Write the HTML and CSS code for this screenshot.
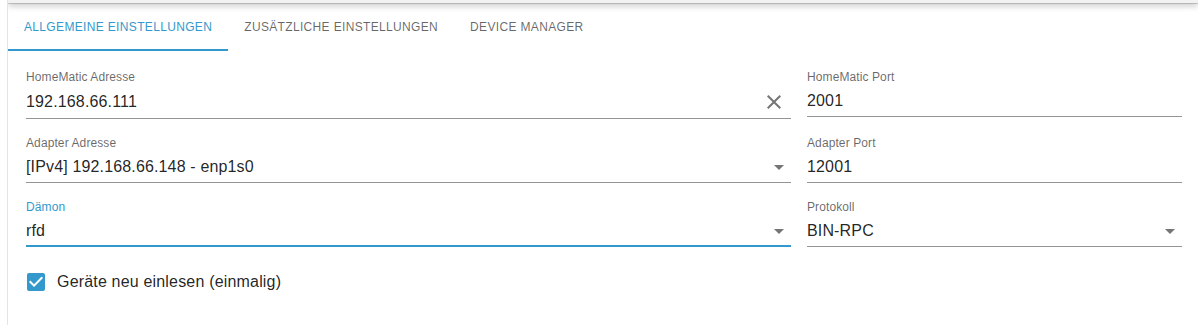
FILE: index.html
```html
<!DOCTYPE html>
<html lang="de">
<head>
<meta charset="utf-8">
<title>Einstellungen</title>
<link rel="stylesheet" href="styles.css">
</head>
<body>
<div class="panel">
  <div class="topbar"></div>
  <nav class="tabs">
    <div class="tab tab--active">Allgemeine Einstellungen</div>
    <div class="tab">Zusätzliche Einstellungen</div>
    <div class="tab">Device Manager</div>
  </nav>
  <div class="content">
    <div class="grid">
      <div class="field">
        <div class="field-label">HomeMatic Adresse</div>
        <div class="field-input field-input--auto">
          <span class="field-value">192.168.66.111</span>
          <svg class="icon icon-clear" viewBox="0 0 24 24"><path d="M19 6.41L17.59 5 12 10.59 6.41 5 5 6.41 10.59 12 5 17.59 6.41 19 12 13.41 17.59 19 19 17.59 13.41 12z"/></svg>
        </div>
      </div>
      <div class="field">
        <div class="field-label">HomeMatic Port</div>
        <div class="field-input">
          <span class="field-value">2001</span>
        </div>
      </div>
      <div class="field">
        <div class="field-label">Adapter Adresse</div>
        <div class="field-input">
          <span class="field-value">[IPv4] 192.168.66.148 - enp1s0</span>
          <svg class="icon" viewBox="0 0 24 24"><path d="M7 10l5 5 5-5z"/></svg>
        </div>
      </div>
      <div class="field">
        <div class="field-label">Adapter Port</div>
        <div class="field-input">
          <span class="field-value">12001</span>
        </div>
      </div>
      <div class="field field--focused">
        <div class="field-label">Dämon</div>
        <div class="field-input">
          <span class="field-value">rfd</span>
          <svg class="icon" viewBox="0 0 24 24"><path d="M7 10l5 5 5-5z"/></svg>
        </div>
      </div>
      <div class="field">
        <div class="field-label">Protokoll</div>
        <div class="field-input">
          <span class="field-value">BIN-RPC</span>
          <svg class="icon" viewBox="0 0 24 24"><path d="M7 10l5 5 5-5z"/></svg>
        </div>
      </div>
    </div>
    <label class="check">
      <span class="check-box">
        <svg viewBox="0 0 24 24"><path d="M19 3H5c-1.11 0-2 .9-2 2v14c0 1.1.89 2 2 2h14c1.11 0 2-.9 2-2V5c0-1.1-.89-2-2-2zm-9 14l-5-5 1.41-1.41L10 14.17l7.59-7.59L19 8l-9 9z"/></svg>
      </span>
      <span class="check-label">Geräte neu einlesen (einmalig)</span>
    </label>
  </div>
</div>
</body>
</html>
```

FILE: styles.css
```css
html, body {
  margin: 0;
  padding: 0;
  background: #ffffff;
}

body {
  font-family: "Liberation Sans", Arial, sans-serif;
  color: rgba(0, 0, 0, 0.87);
  height: 325px;
  overflow: hidden;
}

.panel {
  margin-left: 7px;
  border-left: 1px solid #e4e4e4;
  height: 325px;
  overflow: hidden;
}

.topbar {
  height: 3px;
  background: #f2f2f2;
  box-shadow: 0 1px 1px rgba(0, 0, 0, 0.22), 0 2px 4px -1px rgba(0, 0, 0, 0.2), 0 4px 5px 0 rgba(0, 0, 0, 0.14), 0 1px 10px 0 rgba(0, 0, 0, 0.12);
}

.tabs {
  display: flex;
  height: 48px;
}

.tab {
  display: flex;
  align-items: center;
  padding: 0 16px;
  font-size: 12px;
  letter-spacing: 0.34px;
  text-transform: uppercase;
  color: rgba(0, 0, 0, 0.6);
  white-space: nowrap;
}

.tab--active {
  color: #3399cc;
  box-shadow: inset 0 -2px 0 #3399cc;
}

.content {
  padding: 19px 16px 0 18px;
}

.grid {
  display: grid;
  grid-template-columns: 765fr 375fr;
  column-gap: 16px;
  row-gap: 17px;
  align-items: start;
}

.field-label {
  font-size: 12px;
  line-height: 14px;
  letter-spacing: 0.1px;
  color: rgba(0, 0, 0, 0.6);
}

.field--focused .field-label {
  color: #3399cc;
}

.field-input {
  display: flex;
  align-items: flex-start;
  padding: 5px 0 4px;
  border-bottom: 1px solid #949494;
}

.field-input--auto {
  padding-top: 6px;
  padding-bottom: 5px;
}

.field--focused .field-input {
  padding-bottom: 3px;
  border-bottom: 2px solid #3399cc;
}

.field-value {
  flex: 1;
  font-size: 16px;
  line-height: 23px;
  letter-spacing: 0.15px;
  color: rgba(0, 0, 0, 0.87);
  white-space: nowrap;
}

.icon {
  display: block;
  width: 24px;
  height: 24px;
  margin-bottom: -1px;
  fill: #757575;
}

.icon-clear {
  margin-top: 0;
  margin-bottom: -1px;
  margin-right: 5px;
}

.check {
  display: flex;
  align-items: center;
  margin-top: 14px;
  margin-left: -11px;
}

.check-box {
  display: block;
  padding: 9px;
}

.check-box svg {
  display: block;
  width: 24px;
  height: 24px;
  fill: #3399cc;
}

.check-label {
  font-size: 16px;
  line-height: 24px;
  letter-spacing: 0.18px;
  color: rgba(0, 0, 0, 0.87);
}
```
